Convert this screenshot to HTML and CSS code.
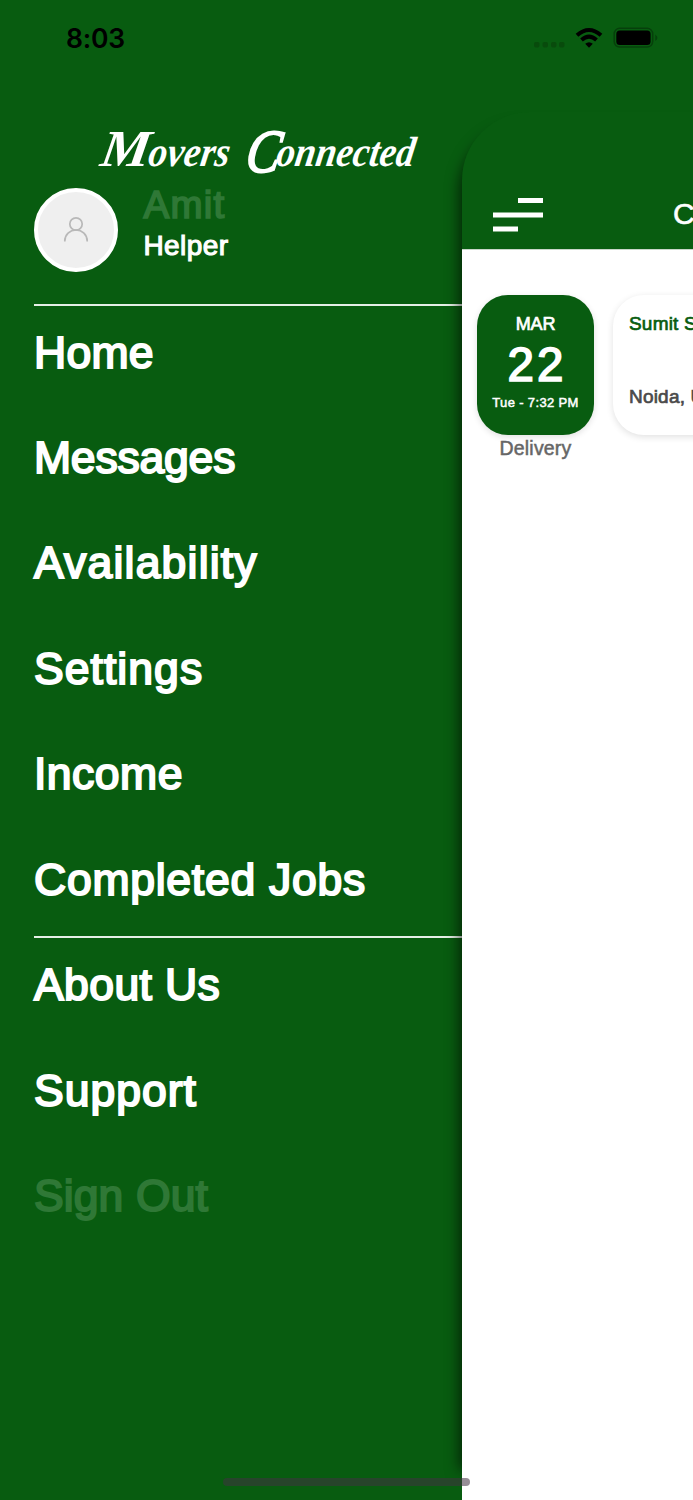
FILE: index.html
```html
<!DOCTYPE html>
<html lang="en">
<head>
<meta charset="utf-8">
<title>Movers Connected</title>
<link rel="stylesheet" href="styles.css">
</head>
<body>
<div class="screen">
  <header class="status">
    <span class="clock">8:03</span>
    <svg class="status-icons" width="126" height="24" viewBox="0 0 126 24">
      <g fill="#084b0c"><rect x="0" y="15" width="5.500" height="5.500" rx="1.800"/><rect x="8.500" y="15" width="5.500" height="5.500" rx="1.800"/><rect x="17" y="15" width="5.500" height="5.500" rx="1.800"/><rect x="25" y="15" width="5.500" height="5.500" rx="1.800"/></g>
      <g fill="none" stroke="#000" stroke-width="4"><path d="M43 8.300Q55 -2.300 67 8.300"/><path d="M47.500 13Q55 6.200 62.500 13"/></g>
      <path d="M51.200 16.800Q55 13.600 58.800 16.800L55 20.700Z"/>
      <rect x="80.200" y="1.300" width="38.500" height="18.800" rx="5.500" fill="none" stroke="#06400b" stroke-width="1.500"/>
      <rect x="82.300" y="3.500" width="34.300" height="14.500" rx="3.500"/>
      <path d="M121.300 7.500Q125.500 10.800 121.300 14.100Z" fill="#06400b"/>
    </svg>
  </header>
  <nav class="sidebar">
    <svg class="logo" width="350" height="60" viewBox="0 0 350 60"><g transform="translate(0 42) skewX(-9)"><text class="logo-text"><tspan class="cap-m" x="9" y="0" textLength="49" lengthAdjust="spacingAndGlyphs">M</tspan><tspan x="57" y="0" textLength="81" lengthAdjust="spacingAndGlyphs">overs</tspan><tspan class="cap-c" x="155" y="6" textLength="34" lengthAdjust="spacingAndGlyphs">C</tspan><tspan x="185" y="0" textLength="138" lengthAdjust="spacingAndGlyphs">onnected</tspan></text></g></svg>
    <section class="profile">
      <div class="avatar">
        <svg width="26" height="28" viewBox="0 0 26 28" fill="none" stroke="#b8b8b8" stroke-width="1.700"><circle cx="13" cy="8" r="6.200"/><path d="M1.800 25.500V25A11.200 11 0 0 1 24.200 25V25.500"/></svg>
      </div>
      <div class="person"><span class="name">Amit</span><span class="role">Helper</span></div>
    </section>
    <div class="group">
      <a class="item home">Home</a>
      <a class="item messages">Messages</a>
      <a class="item availability">Availability</a>
      <a class="item settings">Settings</a>
      <a class="item income">Income</a>
      <a class="item completed">Completed Jobs</a>
    </div>
    <div class="group">
      <a class="item about">About Us</a>
      <a class="item support">Support</a>
      <a class="item signout">Sign Out</a>
    </div>
  </nav>
  <main class="panel">
    <div class="topbar">
      <svg class="burger" width="50" height="35" viewBox="0 0 50 35" fill="#fff"><rect x="25" width="25" height="5"/><rect y="14.500" width="50" height="5"/><rect y="28.500" width="25" height="5"/></svg>
      <span class="title">C</span>
    </div>
    <div class="jobs">
      <div class="day">
        <div class="date"><span class="month">MAR</span><span class="number">22</span><span class="time">Tue - 7:32 PM</span></div>
        <span class="kind">Delivery</span>
      </div>
      <div class="card"><span class="client">Sumit S</span><span class="place">Noida, U</span></div>
    </div>
  </main>
  <div class="home-indicator"></div>
</div>
</body>
</html>
```

FILE: styles.css
```css
* { box-sizing: border-box; }
body { margin: 0; background: #085c10; font-family: "Liberation Sans", Arial, sans-serif; }
.screen {
  position: relative;
  width: 693px;
  height: 1500px;
  overflow: hidden;
  display: grid;
  grid-template-columns: 462px 231px;
  grid-template-rows: 112px 1388px;
  background: #085c10;
}
.status {
  grid-column: 1 / 3;
  display: flex;
  justify-content: space-between;
  align-items: flex-start;
  padding: 22px 33px 0 66px;
}
.clock { font-family: Inter, sans-serif; font-size: 26.500px; line-height: 33px; font-weight: 600; letter-spacing: -0.2px; }
.status-icons { margin-top: 5px; }
.sidebar { padding: 12px 0 0 34px; color: #fff; }
.logo { display: block; margin-left: 56px; }
.logo-text {
  font-family: "Brush Script MT", "Liberation Serif", serif;
  font-style: italic;
  font-weight: 700;
  font-size: 42px;
  fill: #fff;
}
.cap-m { font-size: 52px; }
.cap-c { font-size: 61px; font-weight: 400; stroke: #fff; stroke-width: 2px; }
.profile { display: flex; gap: 26px; height: 119.500px; padding-top: 4px; }
.avatar {
  width: 84px;
  height: 84px;
  margin-left: -0.500px;
  border: 4px solid #fff;
  border-radius: 50%;
  background: #efefef;
  display: flex;
  align-items: center;
  justify-content: center;
}
.person { display: flex; flex-direction: column; white-space: nowrap; }
.name { font-size: 38.500px; line-height: 40px; margin-top: -3px; color: #2f7836; letter-spacing: 1.2px; -webkit-text-stroke: 1.700px #2f7836; }
.role { font-size: 28px; line-height: 36px; margin-top: 3px; letter-spacing: 0.400px; -webkit-text-stroke: 1.100px #fff; }
.group { border-top: 2px solid #e5efe6; height: 632.500px; }
.item {
  display: flex;
  align-items: center;
  height: 105.400px;
  padding-bottom: 11px;
  font-size: 44.500px;
  white-space: nowrap;
  -webkit-text-stroke: 2px currentColor;
}
.home { letter-spacing: 0.300px; }
.messages { letter-spacing: -0.200px; }
.availability { letter-spacing: 1.200px; }
.settings { letter-spacing: 1.050px; }
.income { letter-spacing: 0.500px; }
.completed { letter-spacing: 0.750px; }
.about { letter-spacing: 0.400px; }
.support { letter-spacing: 1px; }
.signout { letter-spacing: 0.100px; color: #2f7836; }
.panel {
  position: relative;
  display: flex;
  flex-direction: column;
}
.panel::before {
  content: "";
  position: absolute;
  inset: 14px 0 30px 0;
  border-radius: 67px 0 0 0;
  box-shadow: -3px 0 14px rgba(0, 0, 0, 0.6);
}
.topbar {
  position: relative;
  height: 136.500px;
  padding: 86px 0 0 31px;
  border-radius: 68px 0 0 0;
  background: #085c10;
  color: #fff;
  display: flex;
  align-items: flex-start;
  gap: 130px;
  overflow: hidden;
}
.burger { flex: none; }
.title { font-size: 30px; line-height: 32px; white-space: nowrap; -webkit-text-stroke: 0.600px #fff; }
.jobs {
  position: relative;
  flex: 1;
  display: flex;
  align-items: flex-start;
  gap: 19px;
  padding: 45px 0 0 15px;
  background: #fff;
  border-top: 1px solid #c9d6ca;
  overflow: hidden;
}
.day { flex: none; width: 117px; display: flex; flex-direction: column; align-items: center; }
.date {
  width: 117px;
  height: 140px;
  border-radius: 31px;
  background: #085c10;
  color: #fff;
  display: flex;
  flex-direction: column;
  align-items: center;
  padding-top: 17px;
  box-shadow: 0 2px 6px rgba(0, 0, 0, 0.12);
  white-space: nowrap;
}
.month { font-size: 18px; line-height: 24px; letter-spacing: -0.200px; -webkit-text-stroke: 0.700px #fff; }
.number { font-size: 47.500px; line-height: 58px; letter-spacing: 3px; margin-right: -3px; -webkit-text-stroke: 1.700px #fff; }
.time { font-size: 13px; line-height: 17px; letter-spacing: 0.350px; -webkit-text-stroke: 0.500px #fff; }
.kind { font-size: 19.500px; line-height: 26px; color: #666; letter-spacing: 0.200px; -webkit-text-stroke: 0.500px #666; }
.card {
  flex: none;
  width: 400px;
  height: 140px;
  border-radius: 31px;
  background: #fff;
  box-shadow: 0 2px 7px rgba(0, 0, 0, 0.12);
  padding: 16px;
  display: flex;
  flex-direction: column;
  justify-content: space-between;
  font-size: 19px;
  line-height: 25px;
  letter-spacing: 0.200px;
  -webkit-text-stroke: 0.700px currentColor;
}
.client { color: #085c10; }
.place { color: #4a4a4a; margin-bottom: 10px; }
.home-indicator {
  position: absolute;
  left: 223px;
  top: 1478px;
  width: 247px;
  height: 8px;
  border-radius: 4px;
  background: rgba(65, 50, 65, 0.55);
}
```
